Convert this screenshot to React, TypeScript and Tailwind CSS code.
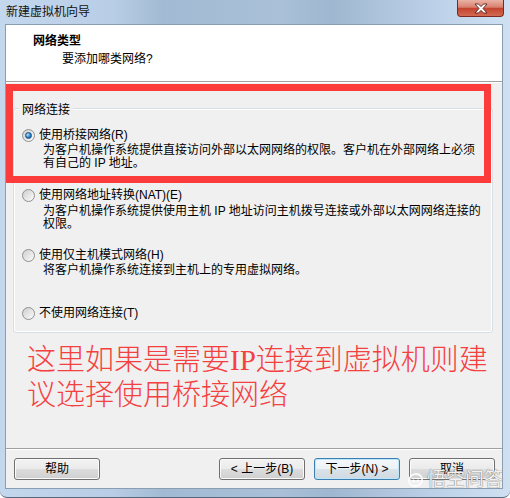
function Radio({ checked }: { checked?: boolean }) {
  return (
    <span className="flex h-[13px] w-[13px] shrink-0 items-center justify-center rounded-full border border-[#8e8f8f] bg-[linear-gradient(135deg,#cfcfcf,#fdfdfd)]">
      {checked ? (
        <span className="h-[7px] w-[7px] rounded-full border border-[#1d4f80] bg-[radial-gradient(circle_at_35%_35%,#b4e6ff,#2a7fc4_55%,#0d4a87)]" />
      ) : (
        <span className="h-[9px] w-[9px] rounded-full bg-[linear-gradient(135deg,#d2d2d2,#f7f7f7)]" />
      )}
    </span>
  );
}

function Option({
  label,
  checked,
  desc,
  className,
  descClass,
}: {
  label: string;
  checked?: boolean;
  desc?: string[];
  className?: string;
  descClass?: string;
}) {
  return (
    <div className={className}>
      <div className="flex h-[16px] items-center gap-[4px]">
        <Radio checked={checked} />
        <span className="leading-[16px]">{label}</span>
      </div>
      {desc && (
        <div className={`ml-[21px] whitespace-nowrap leading-[13px] ${descClass ?? ''}`}>
          {desc.map((line) => (
            <div key={line}>{line}</div>
          ))}
        </div>
      )}
    </div>
  );
}

function Button({ children, focused }: { children: React.ReactNode; focused?: boolean }) {
  return (
    <div
      className={
        focused
          ? 'flex h-[22px] w-[86px] items-center justify-center rounded-[3px] border border-[#3c7fb1] bg-[linear-gradient(#f4f8fb_0%,#ebf1f5_50%,#dbe3e9_50%,#d0d9e0_100%)] shadow-[inset_0_0_0_1px_#bde6fa]'
          : 'flex h-[22px] w-[86px] items-center justify-center rounded-[3px] border border-[#707070] bg-[linear-gradient(#f2f2f2_0%,#ebebeb_50%,#dddddd_50%,#cfcfcf_100%)] shadow-[inset_0_0_0_1px_#fbfbfb]'
      }
    >
      {children}
    </div>
  );
}

export default function App() {
  return (
    <div className="relative h-[498px] w-[510px] overflow-hidden rounded-b-[7px] border-b border-[#55687c] bg-[linear-gradient(90deg,#c3d7ed_0%,#b8cee6_22%,#a2bad3_32%,#a9c0d8_55%,#9fb7d0_65%,#bcd1e8_85%,#cfe0f2_100%)] font-['Liberation_Sans','Noto_Sans_CJK_SC',sans-serif] text-[12px] text-black">
      <div className="flex h-[24px] items-start justify-between">
        <span className="mt-[4px] pl-[6px] leading-[16px] text-[#111]">新建虚拟机向导</span>
        <div className="mr-[6px] flex h-[17px] w-[47px] items-center justify-center rounded-b-[4px] border border-t-0 border-[#7b2a22] bg-[linear-gradient(#eab2a5_0%,#d9816f_45%,#c3432f_52%,#d46a52_100%)]">
          <svg width="14" height="11" viewBox="0 0 14 11">
            <path
              d="M1 1 H4.5 L7 3.6 L9.5 1 H13 L9 5.5 L13 10 H9.5 L7 7.4 L4.5 10 H1 L5 5.5 Z"
              fill="#fff"
              stroke="#5a2019"
              strokeWidth="0.9"
              strokeLinejoin="round"
            />
          </svg>
        </div>
      </div>

      <div className="ml-[5px] mr-[7px] flex h-[465px] flex-col border border-[#8b9db1] bg-[#f0f0f0]">
        <div className="h-[56px] bg-white pl-[27px] pt-[8px]">
          <div className="font-bold leading-[16px]">网络类型</div>
          <div className="ml-[29px] mt-[2px] leading-[16px]">要添加哪类网络?</div>
        </div>
        <div className="h-px bg-[#a0a0a0]" />
        <div className="h-px bg-white" />

        <div className="flex-1">
          <div className="relative ml-[7px] mr-[9px] mt-[25px] h-[225px] rounded-[3px] border border-[#d5dfe5] pl-[8px] pt-[18px] shadow-[inset_0_0_0_1px_#fff]">
            <span className="absolute -top-[7px] left-[5px] bg-[#f0f0f0] px-[3px] leading-[16px]">网络连接</span>
            <Option
              checked
              label="使用桥接网络(R)"
              descClass="mt-[1px]"
              desc={[
                '为客户机操作系统提供直接访问外部以太网网络的权限。客户机在外部网络上必须',
                '有自己的 IP 地址。',
              ]}
            />
            <Option
              className="mt-[17px]"
              descClass="mt-[2px]"
              label="使用网络地址转换(NAT)(E)"
              desc={[
                '为客户机操作系统提供使用主机 IP 地址访问主机拨号连接或外部以太网网络连接的',
                '权限。',
              ]}
            />
            <Option
              className="mt-[16px]"
              descClass="mt-[1px]"
              label="使用仅主机模式网络(H)"
              desc={['将客户机操作系统连接到主机上的专用虚拟网络。']}
            />
            <Option className="mt-[28px]" label="不使用网络连接(T)" />
          </div>

          <div className="ml-[21px] mt-[10px] font-['Liberation_Serif','Noto_Sans_CJK_SC',serif] text-[29px] font-light leading-[35px] text-[#f54040]">
            这里如果是需要IP连接到虚拟机则建
            <br />
            议选择使用桥接网络
          </div>
        </div>

        <div className="h-px bg-[#a0a0a0]" />
        <div className="h-px bg-white" />
        <div className="flex h-[38px] items-start justify-between pl-[8px] pr-[7px] pt-[8px]">
          <Button>帮助</Button>
          <div className="flex gap-[9px]">
            <Button>&lt; 上一步(B)</Button>
            <Button focused>下一步(N) &gt;</Button>
            <Button>取消</Button>
          </div>
        </div>
      </div>

      {/* red annotation box */}
      <div className="pointer-events-none absolute left-[6px] top-[84px] h-[99px] w-[485px] border-[7px] border-[#fc3b3b]" />

      {/* watermark */}
      <div className="pointer-events-none absolute left-[407px] top-[470px] flex items-center gap-[3px] text-[19px] leading-[20px] text-white/90 [text-shadow:0_0_1px_#777,0_0_1px_#777]">
        <svg width="17" height="16" viewBox="0 0 17 16" className="opacity-90">
          <path d="M2 9 C2 4 6 2 9 2 C13 2 16 5 15 9 C14 13 10 14 8 14 C4 14 2 12 2 9 Z" fill="none" stroke="#fff" strokeWidth="1.8" />
          <circle cx="6.5" cy="9" r="1.4" fill="#fff" />
          <circle cx="11" cy="9" r="1.4" fill="#fff" />
        </svg>
        <span>悟空问答</span>
      </div>
    </div>
  );
}
